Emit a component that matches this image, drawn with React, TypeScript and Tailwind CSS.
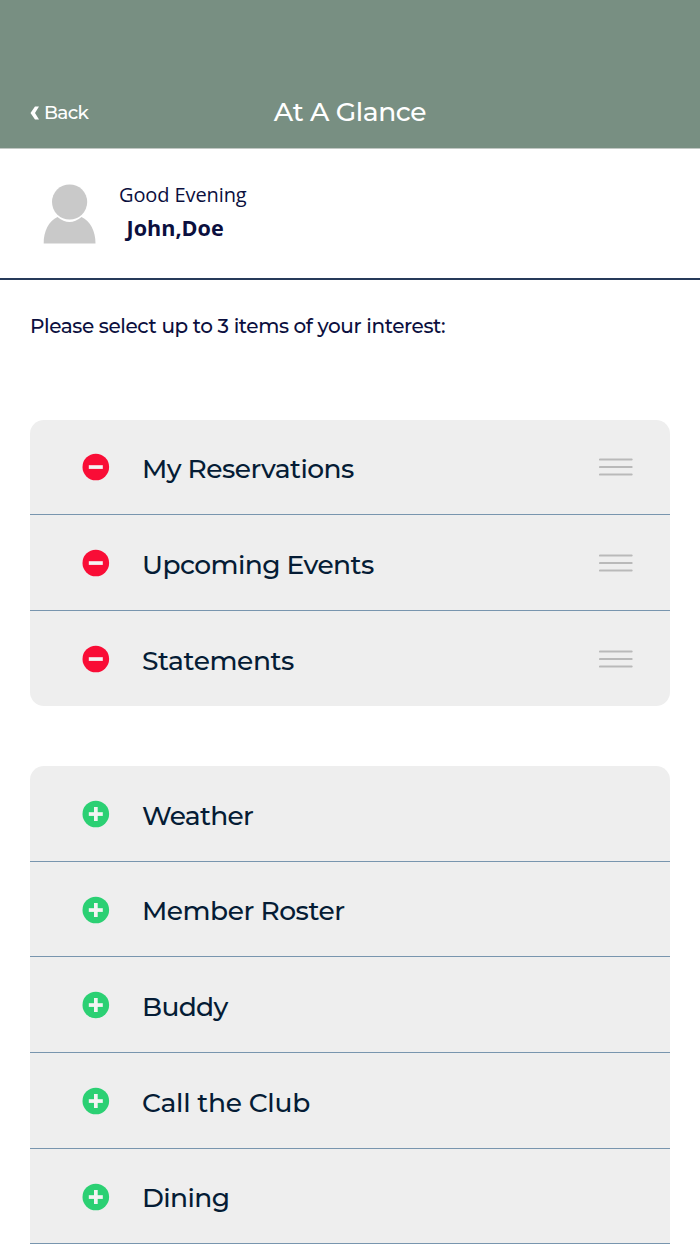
import clsx from "clsx";

type Item = {
  label: string;
  tracking: string;
};

const selectedItems: Item[] = [
  { label: "My Reservations", tracking: "tracking-[-0.55px]" },
  { label: "Upcoming Events", tracking: "tracking-[-0.56px]" },
  { label: "Statements", tracking: "tracking-[-0.4px]" },
];

const availableItems: Item[] = [
  { label: "Weather", tracking: "tracking-[-0.7px]" },
  { label: "Member Roster", tracking: "tracking-[-0.48px]" },
  { label: "Buddy", tracking: "tracking-[-0.65px]" },
  { label: "Call the Club", tracking: "tracking-[-0.24px]" },
  { label: "Dining", tracking: "tracking-[-0.6px]" },
];

function ToggleIcon({ selected }: { selected: boolean }) {
  return (
    <svg viewBox="0 0 28 28" className="mt-[1.4px] w-7 h-7 shrink-0">
      <circle cx="13.8" cy="14" r="13.3" fill={selected ? "#f90d36" : "#2bd073"} />
      <rect x="6.8" y="12.2" width="14" height="3.7" fill="#f4f4f4" />
      {!selected && <rect x="12" y="7" width="3.7" height="14" fill="#f4f4f4" />}
    </svg>
  );
}

function DragHandle() {
  return (
    <svg viewBox="0 0 34 20" className="mt-[1.4px] w-[34px] h-5 shrink-0" stroke="#b9b9b9" strokeWidth="2.2" strokeLinecap="round">
      <path d="M1 2.5h31.6M1 10h31.6M1 17.5h31.6" />
    </svg>
  );
}

function ItemList({ items, selected }: { items: Item[]; selected: boolean }) {
  return (
    <ul className={clsx("bg-[#eeeeee] overflow-hidden", selected ? "rounded-[14px]" : "rounded-t-[14px]")}>
      {items.map((item, index) => (
        <li
          key={item.label}
          className={clsx(
            "h-[95.6px] flex items-center pl-[52px] pr-[37px]",
            (!selected || index < items.length - 1) && "border-b border-[#7895ae]"
          )}
        >
          <ToggleIcon selected={selected} />
          <span className={clsx("ml-8 mt-[4.6px] flex-1 text-[26.5px] leading-8 font-medium text-[#051c35]", item.tracking)}>
            <span>{item.label}</span>
          </span>
          {selected && <DragHandle />}
        </li>
      ))}
    </ul>
  );
}

export default function App() {
  return (
    <div className="w-full h-[1244px] overflow-hidden bg-white font-[Montserrat,Inter,sans-serif]">
      {/* Header */}
      <header className="h-[149px] pt-[76px] px-[30px] grid grid-cols-[1fr_auto_1fr] items-center bg-[#788f82] border-b border-[#c2c8c4] text-white">
        <button className="pt-[2px] flex items-center gap-[4px] text-[18.5px] font-medium tracking-[-0.7px]">
          <svg viewBox="0 0 10 14" className="w-[10px] h-[14px]" fill="currentColor">
            <path d="M5 0.5H9L5 7L9 13.5H5L0.5 7Z" />
          </svg>
          <span>Back</span>
        </button>
        <h1 className="pb-px text-[26.5px] leading-8 font-medium tracking-[-0.4px]">At A Glance</h1>
      </header>

      {/* Member */}
      <section className="h-[131px] pl-[43px] flex items-start border-b-2 border-[#263a5a] text-[#0b0f3e] font-['Open_Sans',sans-serif]">
        <svg viewBox="0 0 53 61" className="mt-[34px] w-[53px] h-[61px]" fill="#c9c9c9">
          <path d="M0.7 60.5C0.5 48 6 38 14.5 34Q26.5 44 38.5 34C47 38 52.7 48 52.5 60.5Z" />
          <circle cx="26.6" cy="19" r="17.6" />
        </svg>
        <div className="pt-[32px] pl-[23px]">
          <p className="text-[20px] leading-7 tracking-[-0.1px]">Good Evening</p>
          <p className="mt-[5px] pl-[7.5px] text-[21.6px] leading-7 font-bold">John,Doe</p>
        </div>
      </section>

      <main className="px-[30px]">
        <p className="pt-[32px] h-[139.5px] text-[20px] leading-7 font-medium tracking-[-0.39px] text-[#0b0f3e]">
          <span>Please select up to 3 items of your interest:</span>
        </p>
        <ItemList items={selectedItems} selected />
        <div className="h-[59.9px]" />
        <ItemList items={availableItems} selected={false} />
      </main>
    </div>
  );
}
